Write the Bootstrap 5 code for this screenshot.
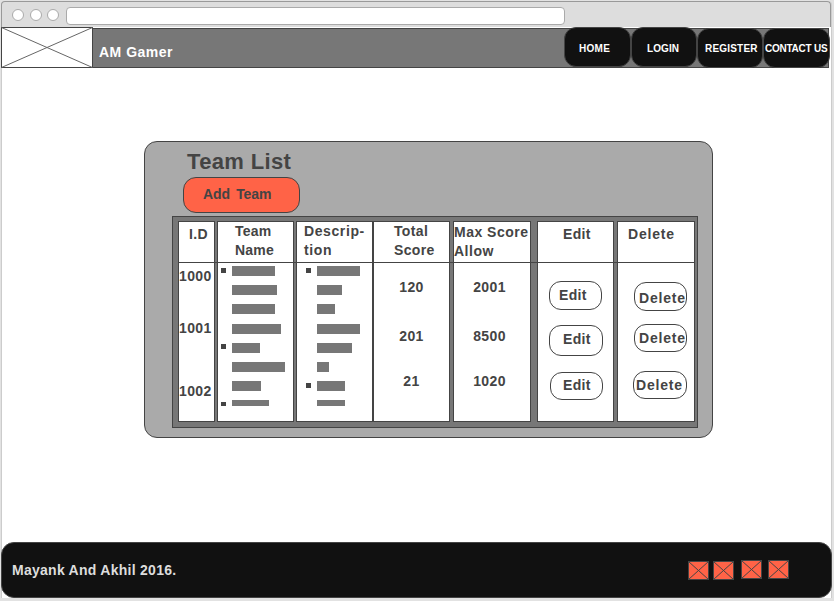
<!DOCTYPE html>
<html lang="en">
<head>
<meta charset="utf-8">
<title>AM Gamer</title>
<link href="https://cdn.jsdelivr.net/npm/bootstrap@5.3.0/dist/css/bootstrap.min.css" rel="stylesheet">
<style>
body{width:834px;height:601px;overflow:hidden;background:#e2e2e2;padding:1px 0 0 1px;font:bold 14px/16px "Liberation Sans",Arial,sans-serif;letter-spacing:.35px;color:#444;white-space:nowrap}
.window{width:830px;height:597px;background:#fff;border-radius:4px 4px 0 0;box-shadow:inset 1px 0 0 #ccc,1px 0 0 #ccc}
.chrome{height:26px;background:#ddd;border:1px solid #999;border-bottom:0;border-radius:4px 4px 0 0;padding:5px 0 0 10px}
.dot{width:12px;height:12px;border:1px solid #aaa;border-radius:50%;background:#fff;margin:2px 5.5px 0 0}
.address{width:499px;height:18px;border:1px solid #aaa;border-radius:4px;background:#fff;margin-left:1px}
.site-bar{height:41px;padding:0}
.logo{width:92px;height:41px}
.bar-fill{height:40px;width:736px;margin-top:1px;background:#777;border:1px solid #444;border-left:0;padding-left:6px}
.brand{margin-top:15px;color:#fff;letter-spacing:.5px}
.menu{margin-right:-2px;margin-top:-2px}
.menu a{width:67px;height:40px;border:1px solid #444;border-radius:12px;background:#111;color:#fff;font-size:10px;line-height:12px;padding-top:15px;letter-spacing:.3px;text-decoration:none}
.menu a:nth-child(1){padding-left:14px}
.menu a:nth-child(2){width:66px;padding-left:15px;letter-spacing:.1px}
.menu a:nth-child(3){width:66px;margin-top:1px;padding-left:7px;padding-top:14px;letter-spacing:.2px}
.menu a:nth-child(4){margin-top:1px;padding-left:1px;padding-top:14px;letter-spacing:-.25px}
.content{height:474px;padding:73px 0 0 143px}
.panel{width:569px;height:297px;background:#aaa;border:1px solid #444;border-radius:13px;padding:7px 0 0 27px}
.panel h1{font-size:22px;line-height:26px;font-weight:bold;letter-spacing:.35px;margin:0 0 2px 15px}
.add{width:117px;height:36px;border:1px solid #444;border-radius:13px;background:#ff6347;margin:0 0 3px 11px;padding:8px 0 0 19px;letter-spacing:-.1px;word-spacing:2.5px}
.grid{width:526px;height:212px;background:#777;border:1px solid #444;padding:4px 2px 0 5px}
.heads{height:42px;border-bottom:1px solid #444}
.values{height:159px}
.cell{width:77px;background:#fff;border:1px solid #444;border-width:1px 1px 0}
.values .cell{border-width:0 1px 1px}
.c1{width:37px}.c2,.c3{margin-left:2px}.c5{width:78px;margin-left:3px}.c6{margin-left:6px}.c7{width:78px;margin-left:3px}
.heads .cell{line-height:19px}
.heads .c1{padding:3px 0 0 10px}
.heads .c2{padding-left:17px;letter-spacing:.2px}
.heads .c3{padding-left:7px;letter-spacing:.6px}
.heads .c4{padding-left:20px}
.heads .c5{padding-top:1px;letter-spacing:.5px}
.heads .c6{padding:3px 0 0 25px}
.heads .c7{padding:3px 0 0 10px;letter-spacing:.8px}
.c1 .val{margin-top:36px}.c1 .val:first-child{margin-top:5px}.c1 .val:last-child{margin-top:47px}
.c4 .val,.c5 .val{margin-top:33px;text-align:center}
.c4 .val:first-child,.c5 .val:first-child{margin-top:16px}.c4 .val:last-child,.c5 .val:last-child{margin-top:29px}
.values .c5{padding-right:5px}
.lines{padding:3px 0 0 3px}
.values .c3.lines{padding-left:9px}
.line{height:19px}.line:nth-child(3){height:20px}
.line i{width:5px;height:5px;margin:2px 6px 0 0}.line i.on{background:#444}.line:nth-child(5) i{margin-top:1px}.line:last-child i{height:4px}
.line b{height:10px;background:#777}.line:last-child b{height:6px}
.act{width:53px;height:29px;border:1px solid #444;border-radius:12px;background:#fff;color:inherit;font:inherit;letter-spacing:inherit;text-align:left;padding:0}
.c6 .act{margin:18px 0 0 11px;padding:0 0 2px 9px}
.c6 .act:nth-child(2){margin-top:15px;width:54px;height:31px;padding:0 0 3px 13px}
.c6 .act:nth-child(3){margin:16px 0 0 12px;height:28px;padding:0 0 3px 12px}
.values .c7{letter-spacing:.8px}
.c7 .act{margin:19px 0 0 16px;padding:2px 0 0 4px}
.c7 .act:nth-child(2){margin-top:13px;height:28px;padding-top:0}
.c7 .act:nth-child(3){margin:19px 0 0 15px;width:54px;height:28px;padding:0 0 1px 2px}
.foot{width:831px;height:56px;background:#111;border:1px solid #444;border-radius:13px;padding:0 42px 0 10px;color:#ddd}
.foot p{margin:19px 0 0;letter-spacing:.27px}
.social{margin-top:17px}
.social svg:nth-child(-n+2){margin-top:1px}
.social svg:nth-child(2){margin-left:4px}.social svg:nth-child(3){margin-left:7px}.social svg:nth-child(4){margin-left:6px}
</style>
<script src="https://cdn.jsdelivr.net/npm/bootstrap@5.3.0/dist/js/bootstrap.bundle.min.js"></script>
</head>
<body>
<div class="window">
<div class="chrome d-flex"><span class="dot"></span><span class="dot"></span><span class="dot"></span><div class="address"></div></div>
<header class="site-bar navbar d-flex flex-nowrap align-items-start justify-content-start">
<svg class="logo flex-shrink-0" viewBox="0 0 92 41"><rect x=".5" y=".5" width="91" height="40" fill="#fff" stroke="#444"/><path d="M.5 .5L91.5 40.5M.5 40.5L91.5 .5" stroke="#666" fill="none"/></svg>
<div class="bar-fill d-flex justify-content-between flex-shrink-0"><div class="brand">AM Gamer</div>
<nav class="menu d-flex"><a href="#">HOME</a><a href="#">LOGIN</a><a href="#">REGISTER</a><a href="#">CONTACT US</a></nav></div>
</header>
<main class="content">
<section class="panel">
<h1>Team List</h1>
<div class="add">Add Team</div>
<div class="grid">
<div class="heads d-flex"><div class="cell c1">I.D</div><div class="cell c2">Team<br>Name</div><div class="cell c3">Descrip-<br>tion</div><div class="cell c4">Total<br>Score</div><div class="cell c5">Max Score<br>Allow</div><div class="cell c6">Edit</div><div class="cell c7">Delete</div></div>
<div class="values d-flex">
<div class="cell c1"><div class="val">1000</div><div class="val">1001</div><div class="val">1002</div></div>
<div class="cell c2 lines">
<div class="line d-flex"><i class="on"></i><b style="width:43px"></b></div><div class="line d-flex"><i></i><b style="width:45px"></b></div><div class="line d-flex"><i></i><b style="width:43px"></b></div><div class="line d-flex"><i></i><b style="width:49px"></b></div><div class="line d-flex"><i class="on"></i><b style="width:28px"></b></div><div class="line d-flex"><i></i><b style="width:53px"></b></div><div class="line d-flex"><i></i><b style="width:29px"></b></div><div class="line d-flex"><i class="on"></i><b style="width:37px"></b></div></div>
<div class="cell c3 lines">
<div class="line d-flex"><i class="on"></i><b style="width:43px"></b></div><div class="line d-flex"><i></i><b style="width:25px"></b></div><div class="line d-flex"><i></i><b style="width:18px"></b></div><div class="line d-flex"><i></i><b style="width:43px"></b></div><div class="line d-flex"><i></i><b style="width:35px"></b></div><div class="line d-flex"><i></i><b style="width:12px"></b></div><div class="line d-flex"><i class="on"></i><b style="width:28px"></b></div><div class="line d-flex"><i></i><b style="width:28px"></b></div></div>
<div class="cell c4"><div class="val">120</div><div class="val">201</div><div class="val">21</div></div>
<div class="cell c5"><div class="val">2001</div><div class="val">8500</div><div class="val">1020</div></div>
<div class="cell c6 d-flex flex-column"><button class="act">Edit</button><button class="act">Edit</button><button class="act">Edit</button></div>
<div class="cell c7 d-flex flex-column"><button class="act">Delete</button><button class="act">Delete</button><button class="act">Delete</button></div>
</div>
</div>
</section>
</main>
<footer class="foot d-flex justify-content-between"><p>Mayank And Akhil 2016.</p>
<div class="social d-flex align-items-start">
<svg width="21" height="19"><rect x=".5" y=".5" width="20" height="18" fill="#ff6347" stroke="#444"/><path d="M.5 .5L20.5 18.5M.5 18.5L20.5 .5" stroke="#444"/></svg>
<svg width="21" height="19"><rect x=".5" y=".5" width="20" height="18" fill="#ff6347" stroke="#444"/><path d="M.5 .5L20.5 18.5M.5 18.5L20.5 .5" stroke="#444"/></svg>
<svg width="21" height="19"><rect x=".5" y=".5" width="20" height="18" fill="#ff6347" stroke="#444"/><path d="M.5 .5L20.5 18.5M.5 18.5L20.5 .5" stroke="#444"/></svg>
<svg width="21" height="19"><rect x=".5" y=".5" width="20" height="18" fill="#ff6347" stroke="#444"/><path d="M.5 .5L20.5 18.5M.5 18.5L20.5 .5" stroke="#444"/></svg>
</div></footer>
</div>
</body>
</html>
